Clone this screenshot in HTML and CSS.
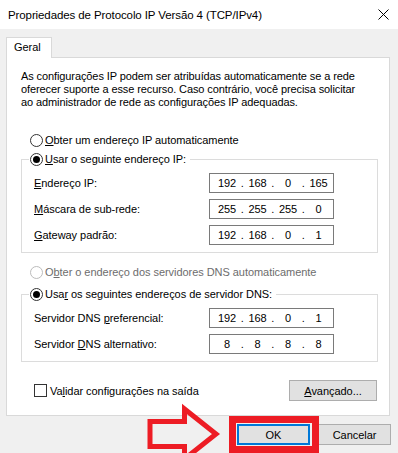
FILE: index.html
```html
<!DOCTYPE html>
<html lang="pt">
<head>
<meta charset="utf-8">
<title>Propriedades de Protocolo IP Versão 4 (TCP/IPv4)</title>
<link rel="stylesheet" href="styles.css">
</head>
<body>
<div class="window">
  <div class="titlebar">
    <span class="title">Propriedades de Protocolo IP Versão 4 (TCP/IPv4)</span>
    <svg class="close" width="11" height="11" viewBox="0 0 11 11"><path d="M0.5 0.5 L10.5 10.5 M10.5 0.5 L0.5 10.5" stroke="#000" stroke-width="1" fill="none"/></svg>
  </div>
  <div class="main">
    <div class="tabs"><div class="tab">Geral</div></div>
    <div class="panel">
      <p class="desc">As configurações IP podem ser atribuídas automaticamente se a rede<br>oferecer suporte a esse recurso. Caso contrário, você precisa solicitar<br>ao administrador de rede as configurações IP adequadas.</p>

      <div class="option first"><span class="radio"></span><span><u>O</u>bter um endereço IP automaticamente</span></div>

      <fieldset class="group">
        <legend class="legend"><span class="radio checked"></span><span><u>U</u>sar o seguinte endereço IP:</span></legend>
        <div class="rows">
          <div class="row"><span><u>E</u>ndereço IP:</span>
            <div class="ip"><span>192</span><i>.</i><span>168</span><i>.</i><span>0</span><i>.</i><span>165</span></div></div>
          <div class="row"><span><u>M</u>áscara de sub-rede:</span>
            <div class="ip"><span>255</span><i>.</i><span>255</span><i>.</i><span>255</span><i>.</i><span>0</span></div></div>
          <div class="row"><span><u>G</u>ateway padrão:</span>
            <div class="ip"><span>192</span><i>.</i><span>168</span><i>.</i><span>0</span><i>.</i><span>1</span></div></div>
        </div>
      </fieldset>

      <div class="option second disabled"><span class="radio"></span><span>O<u>b</u>ter o endereço dos servidores DNS automaticamente</span></div>

      <fieldset class="group dns">
        <legend class="legend"><span class="radio checked"></span><span>Usa<u>r</u> os seguintes endereços de servidor DNS:</span></legend>
        <div class="rows">
          <div class="row"><span>Servidor DNS <u>p</u>referencial:</span>
            <div class="ip"><span>192</span><i>.</i><span>168</span><i>.</i><span>0</span><i>.</i><span>1</span></div></div>
          <div class="row"><span>Servidor <u>D</u>NS alternativo:</span>
            <div class="ip"><span>8</span><i>.</i><span>8</span><i>.</i><span>8</span><i>.</i><span>8</span></div></div>
        </div>
      </fieldset>

      <div class="bottomrow">
        <label class="check"><span class="box"></span><span>Va<u>l</u>idar configurações na saída</span></label>
        <button class="btn adv"><u>A</u>vançado...</button>
      </div>
    </div>
    <div class="actions">
      <button class="btn ok">OK</button>
      <button class="btn">Cancelar</button>
    </div>
  </div>
  <div class="highlight"></div>
  <svg class="arrow" width="90" height="70" viewBox="140 400 90 70">
    <polygon points="150,421.5 184.5,421.5 184.5,409 216,434 184.5,459 184.5,446.5 150,446.5" fill="none" stroke="#ed1c24" stroke-width="5" stroke-linejoin="miter" stroke-miterlimit="10"/>
  </svg>
</div>
</body>
</html>
```

FILE: styles.css
```css
html, body {
  margin: 0;
  padding: 0;
}
body {
  background: #f0f0f0;
  font-family: "Liberation Sans", Arial, sans-serif;
  font-size: 11px;
  letter-spacing: -0.05px;
  color: #000;
  width: 398px;
  height: 453px;
  overflow: hidden;
}
.window {
  position: relative;
  width: 398px;
  height: 453px;
  overflow: hidden;
}
.titlebar {
  height: 29px;
  background: #fff;
  display: flex;
  align-items: center;
  justify-content: space-between;
  padding: 0 9px 0 8px;
}
.title {
  font-size: 11.5px;
  letter-spacing: -0.1px;
  line-height: 16px;
  padding-top: 1px;
}
.close {
  display: block;
}
.main {
  padding: 8px 8px 0 6px;
}
.tabs {
  display: flex;
}
.tab {
  position: relative;
  z-index: 1;
  width: 46px;
  box-sizing: border-box;
  height: 21px;
  border: 1px solid #d9d9d9;
  border-bottom: 0;
  background: #fff;
  margin-bottom: -1px;
  padding-left: 7px;
  line-height: 19px;
}
.panel {
  width: 384px;
  height: 359px;
  box-sizing: border-box;
  background: #fff;
  border: 1px solid #d9d9d9;
  padding: 12px 11px 0 14px;
}
.desc {
  margin: 0;
  line-height: 13px;
  white-space: nowrap;
  letter-spacing: -0.1px;
}
.option {
  display: flex;
  align-items: center;
  height: 16px;
}
.option.first {
  margin-top: 23px;
}
.option.second {
  margin-top: 11px;
}
.option .radio {
  margin-left: 9px;
}
.radio {
  width: 13px;
  height: 13px;
  box-sizing: border-box;
  border: 1px solid #333;
  border-radius: 50%;
  background: #fff;
  display: flex;
  align-items: center;
  justify-content: center;
  margin-right: 2px;
  flex: none;
}
.radio.checked::after {
  content: "";
  width: 7px;
  height: 7px;
  border-radius: 50%;
  background: #000;
}
.disabled {
  color: #6d6d6d;
}
.disabled .radio {
  border-color: #bcbcbc;
}
.group {
  margin: 3px 0 0 0;
  padding: 6px 0 7px 0;
  border: 1px solid #dcdcdc;
  width: 357px;
  box-sizing: border-box;
  min-width: 0;
}
.group.dns {
  margin-top: 6px;
}
.legend {
  display: flex;
  align-items: center;
  height: 16px;
  margin-left: 7px;
  padding: 0 4px 0 1px;
}
.rows {
  display: flex;
  flex-direction: column;
  gap: 6px;
  padding: 0 43px 0 12px;
}
.row {
  display: flex;
  align-items: center;
  justify-content: space-between;
  height: 20px;
}
.ip {
  display: flex;
  align-items: center;
  width: 125px;
  height: 20px;
  box-sizing: border-box;
  border: 1px solid #7a7a7a;
  padding-left: 5.75px;
  line-height: 16px;
  font-size: 11px;
}
.ip span {
  width: 22.5px;
  text-align: center;
}
.ip i {
  font-style: normal;
  width: 8px;
  text-align: center;
}
u {
  text-underline-offset: 1px;
}
.bottomrow {
  display: flex;
  align-items: center;
  justify-content: space-between;
  margin-top: 18px;
  height: 21px;
}
.check {
  display: flex;
  align-items: center;
  margin-left: 13px;
}
.box {
  width: 13px;
  height: 13px;
  box-sizing: border-box;
  border: 1px solid #333;
  background: #fff;
  margin-right: 3px;
}
.btn {
  font: inherit;
  letter-spacing: inherit;
  color: #000;
  background: #e1e1e1;
  border: 1px solid #adadad;
  height: 21px;
  width: 73px;
  padding: 0;
  margin: 0;
  line-height: 18px;
}
.btn.adv {
  width: 88px;
  margin-right: 1px;
}
.btn.ok {
  border: 2px solid #0078d7;
}
.actions {
  display: flex;
  justify-content: flex-end;
  gap: 8px;
  margin-top: 8px;
  margin-right: -1px;
}
.highlight {
  position: absolute;
  left: 229px;
  top: 416px;
  width: 90px;
  height: 37px;
  box-sizing: border-box;
  border: 7px solid #ed1c24;
}
.arrow {
  position: absolute;
  left: 140px;
  top: 400px;
}
```
